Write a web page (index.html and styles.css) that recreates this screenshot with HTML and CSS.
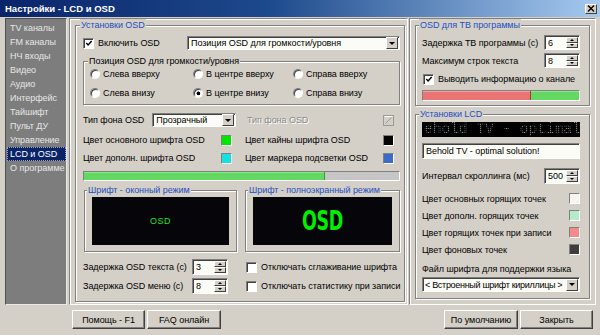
FILE: index.html
```html
<!DOCTYPE html>
<html lang="ru">
<head>
<meta charset="utf-8">
<title>Настройки - LCD и OSD</title>
<link rel="stylesheet" href="styles.css">
</head>
<body>
<div class="window">
  <div class="titlebar">
    <span class="title">Настройки - LCD и OSD</span>
    <span class="close"><svg width="8" height="7" viewBox="0 0 8 7"><path d="M1 0.5L7 6.5M7 0.5L1 6.5" stroke="#000" stroke-width="1.4"/></svg></span>
  </div>
  <div class="content">
    <ul class="sidebar">
      <li>TV каналы</li>
      <li>FM каналы</li>
      <li>НЧ входы</li>
      <li>Видео</li>
      <li>Аудио</li>
      <li>Интерфейс</li>
      <li>Тайшифт</li>
      <li>Пульт ДУ</li>
      <li>Управление</li>
      <li class="active"><span>LCD и OSD</span></li>
      <li>О программе</li>
    </ul>

    <div class="panel main-panel">
      <fieldset class="group osd-group">
        <legend>Установки OSD</legend>
        <div class="row row-enable">
          <label class="check"><span class="cb"><svg width="9" height="9" viewBox="0 0 9 9"><path d="M1.5 4l2 2.2 4-4.6" fill="none" stroke="#000" stroke-width="1.6"/></svg></span>Включить OSD</label>
          <div class="select pos-select"><span class="sel-text">Позиция OSD для громкости/уровня</span><span class="sel-btn"><i class="tri"></i></span></div>
        </div>

        <fieldset class="group pos-group">
          <legend>Позиция OSD для громкости/уровня</legend>
          <div class="radios">
            <label class="radio"><span class="rb"></span>Слева вверху</label>
            <label class="radio"><span class="rb"></span>В центре вверху</label>
            <label class="radio"><span class="rb"></span>Справа вверху</label>
            <label class="radio"><span class="rb"></span>Слева внизу</label>
            <label class="radio"><span class="rb on"></span>В центре внизу</label>
            <label class="radio"><span class="rb"></span>Справа внизу</label>
          </div>
        </fieldset>

        <div class="grid2 bg-row">
          <div class="cell">
            <span class="lbl">Тип фона OSD</span>
            <div class="select bg-select"><span class="sel-text">Прозрачный</span><span class="sel-btn"><i class="tri"></i></span></div>
          </div>
          <div class="cell">
            <span class="lbl disabled">Тип фона OSD</span>
            <svg class="pick" width="11" height="11" viewBox="0 0 11 11"><rect x="0.5" y="0.5" width="10" height="10" fill="none" stroke="#9a9a9a"/><path d="M2.5 8.5L8.5 2.5" stroke="#9a9a9a"/><path d="M1.5 1.5h8" stroke="#fff"/></svg>
          </div>
        </div>

        <div class="grid2 color-row first">
          <div class="cell"><span class="lbl">Цвет основного шрифта OSD</span><span class="swatch" style="background:#00e600"></span></div>
          <div class="cell"><span class="lbl">Цвет кайны шрифта OSD</span><span class="swatch" style="background:#050505"></span></div>
        </div>
        <div class="grid2 color-row">
          <div class="cell"><span class="lbl">Цвет дополн. шрифта OSD</span><span class="swatch" style="background:#18e0e0"></span></div>
          <div class="cell"><span class="lbl">Цвет маркера подсветки OSD</span><span class="swatch" style="background:#3b6cc8"></span></div>
        </div>

        <div class="progress osd-progress"><div class="fill green" style="width:76.5%"></div></div>

        <div class="grid2 fonts">
          <fieldset class="group font-group">
            <legend>Шрифт - оконный режим</legend>
            <div class="screen"><span class="osd-small">OSD</span></div>
          </fieldset>
          <fieldset class="group font-group">
            <legend>Шрифт - полноэкранный режим</legend>
            <div class="screen"><span class="osd-big">OSD</span></div>
          </fieldset>
        </div>

        <div class="grid2 spin-row first">
          <div class="cell"><span class="lbl">Задержка OSD текста (с)</span>
            <div class="spin osd-spin"><span class="spin-val">3</span><span class="spin-btns"><span class="sb"><i class="tri up"></i></span><span class="sb"><i class="tri"></i></span></span></div>
          </div>
          <div class="cell"><label class="check"><span class="cb"></span>Отключать сглаживание шрифта</label></div>
        </div>
        <div class="grid2 spin-row">
          <div class="cell"><span class="lbl">Задержка OSD меню (с)</span>
            <div class="spin osd-spin"><span class="spin-val">8</span><span class="spin-btns"><span class="sb"><i class="tri up"></i></span><span class="sb"><i class="tri"></i></span></span></div>
          </div>
          <div class="cell"><label class="check"><span class="cb"></span>Отключать статистику при записи</label></div>
        </div>
      </fieldset>
    </div>

    <div class="panel right-panel">
      <fieldset class="group tv-group">
        <legend>OSD для ТВ программы</legend>
        <div class="rrow spin-line first">
          <span class="lbl">Задержка ТВ программы (с)</span>
          <div class="spin r-spin"><span class="spin-val">6</span><span class="spin-btns"><span class="sb"><i class="tri up"></i></span><span class="sb"><i class="tri"></i></span></span></div>
        </div>
        <div class="rrow spin-line">
          <span class="lbl">Максимум строк текста</span>
          <div class="spin r-spin"><span class="spin-val">8</span><span class="spin-btns"><span class="sb"><i class="tri up"></i></span><span class="sb"><i class="tri"></i></span></span></div>
        </div>
        <div class="rrow check-line">
          <label class="check"><span class="cb"><svg width="9" height="9" viewBox="0 0 9 9"><path d="M1.5 4l2 2.2 4-4.6" fill="none" stroke="#000" stroke-width="1.6"/></svg></span>Выводить информацию о канале</label>
        </div>
        <div class="progress tv-progress"><div class="fill red" style="width:69%"></div><div class="fill green rest"></div></div>
      </fieldset>

      <fieldset class="group lcd-group">
        <legend>Установки LCD</legend>
        <div class="lcd"><span class="lcd-text">ehold TV - optimal</span></div>
        <div class="textbox">Behold TV - optimal solution!</div>
        <div class="rrow scroll-line">
          <span class="lbl">Интервал скроллинга (мс)</span>
          <div class="spin r-spin"><span class="spin-val">500</span><span class="spin-btns"><span class="sb"><i class="tri up"></i></span><span class="sb"><i class="tri"></i></span></span></div>
        </div>
        <div class="rrow dot-line first"><span class="lbl">Цвет основных горящих точек</span><span class="swatch" style="background:#f4f4f0"></span></div>
        <div class="rrow dot-line"><span class="lbl">Цвет дополн. горящих точек</span><span class="swatch" style="background:#b4ecc8"></span></div>
        <div class="rrow dot-line"><span class="lbl">Цвет горящих точек при записи</span><span class="swatch" style="background:#f48a8a"></span></div>
        <div class="rrow dot-line"><span class="lbl">Цвет фоновых точек</span><span class="swatch" style="background:#3e3e3e"></span></div>
        <div class="rrow file-line"><span class="lbl">Файл шрифта для поддержки языка</span></div>
        <div class="select font-select"><span class="sel-text">&lt; Встроенный шрифт кириллицы &gt;</span><span class="sel-btn"><i class="tri"></i></span></div>
      </fieldset>
    </div>
  </div>

  <div class="footer">
    <div class="btns">
      <span class="btn help">Помощь - F1</span>
      <span class="btn faq">FAQ онлайн</span>
    </div>
    <div class="btns">
      <span class="btn dflt">По умолчанию</span>
      <span class="btn closebtn">Закрыть</span>
    </div>
  </div>
</div>
</body>
</html>
```

FILE: styles.css
```css
* { box-sizing: border-box; }
html, body { margin: 0; padding: 0; }
body {
  background: #d4d0c8;
  font-family: "Liberation Sans", Arial, sans-serif;
  font-size: 9px;
  letter-spacing: -0.05px;
  line-height: 14px;
  color: #000;
}
.window {
  width: 600px;
  height: 335px;
  overflow: hidden;
  background: #d4d0c8;
  display: flex;
  flex-direction: column;
}

/* title bar */
.titlebar {
  flex: none;
  height: 17px;
  display: flex;
  align-items: center;
  justify-content: space-between;
  padding: 0 3px 0 5px;
  background: linear-gradient(90deg, #0a246a 0%, #1d4a8c 45%, #a6caf0 100%);
}
.title { color: #fff; font-weight: bold; font-size: 9.5px; letter-spacing: 0; }
.close {
  width: 12px; height: 10px;
  display: flex; align-items: center; justify-content: center;
  background: #d4d0c8;
  border: 1px solid; border-color: #fff #404040 #404040 #fff;
}

/* content */
.content {
  flex: none;
  height: 287px;
  margin-top: 1px;
  display: flex;
  padding: 0 4px 0 5px;
}
.sidebar {
  list-style: none;
  margin: 0;
  padding: 2px 0 0 1px;
  width: 62px;
  height: 287px;
  background: #7d7d7d;
  border: 1px solid; border-color: #505050 #e8e8e8 #e8e8e8 #505050;
  color: #e6e6e6;
}
.sidebar li { height: 14px; line-height: 14px; padding-left: 3px; white-space: nowrap; }
.sidebar li.active { background: #0a246a; color: #fff; outline: 1px dotted #a0a0c0; outline-offset: -1px; }

.panel {
  height: 287px;
  border: 1px solid; border-color: #808080 #fff #fff #808080;
  box-shadow: inset 1px 1px 0 #fff;
}
.main-panel { width: 339px; margin-left: 2px; padding: 0 2px 0 5px; }
.right-panel { width: 187px; margin-left: 1px; padding: 0 5px 0 5px; }

/* group boxes */
.group {
  margin: 0;
  min-width: 0;
  border: 1px solid #808080;
  box-shadow: 1px 1px 0 #fff, inset 1px 1px 0 #fff;
}
.group > legend {
  padding: 0 1px;
  margin-left: -3px;
  line-height: 12px;
  color: #1f4fc0;
  background: #d4d0c8;
  white-space: nowrap;
}
.osd-group { width: 330px; height: 283px; padding: 5px 4px 0 7px; }
.pos-group { height: 50px; margin-top: 5px; padding: 0 0 0 6px; }
.pos-group > legend { color: #000; margin-left: -2px; }
.tv-group { width: 175px; height: 87px; padding: 2px 9px 0 6px; }
.lcd-group { width: 175px; height: 191px; margin-top: 2px; padding: 2px 9px 0 6px; }

/* rows */
.row { display: flex; align-items: center; height: 14px; }
.row-enable { justify-content: space-between; }
.check { display: flex; align-items: center; white-space: nowrap; }
.cb {
  width: 11px; height: 11px; flex: none;
  display: flex; align-items: center; justify-content: center;
  background: #fff;
  border: 1px solid; border-color: #808080 #fff #fff #808080;
  box-shadow: inset 1px 1px 0 #404040;
  margin-right: 4px;
}
.cb svg { margin: 1px 0 0 1px; }

.select {
  display: flex; align-items: center;
  height: 14px;
  background: #fcfcf6;
  border: 1px solid; border-color: #808080 #fff #fff #808080;
  box-shadow: inset 1px 1px 0 #404040;
  padding: 1px 1px 1px 3px;
}
.sel-text { flex: 1; white-space: nowrap; overflow: hidden; line-height: 12px; }
.sel-btn {
  width: 12px; height: 12px; flex: none;
  display: flex; align-items: center; justify-content: center;
  background: #d4d0c8;
  border: 1px solid; border-color: #fff #404040 #404040 #fff;
}
.tri {
  width: 0; height: 0;
  border-left: 3px solid transparent; border-right: 3px solid transparent;
  border-top: 3px solid #000;
}
.tri.up { border-top: 0; border-bottom: 3px solid #000; }
.pos-select { width: 213px; }

.radios {
  display: grid;
  grid-template-columns: 103px 100px 1fr;
  row-gap: 5px;
}
.radio { display: flex; align-items: center; height: 14px; white-space: nowrap; }
.rb {
  width: 10px; height: 10px; flex: none;
  border-radius: 50%;
  background: #fff;
  border: 1px solid; border-color: #808080 #fff #fff #808080;
  box-shadow: inset 1px 1px 0 #404040;
  margin-right: 3px;
}
.rb.on { background: radial-gradient(circle at 55% 55%, #000 0 1.6px, #fff 2.2px); }

.grid2 { display: grid; grid-template-columns: 154px 155px; column-gap: 8px; }
.cell { display: flex; align-items: center; justify-content: space-between; height: 14px; white-space: nowrap; }
.bg-row { margin-top: 8px; }
.bg-row .cell:first-child { justify-content: flex-start; }
.bg-select { width: 84px; margin-left: 8px; }
.lbl { white-space: nowrap; }
.lbl.disabled { color: #8a8a8a; text-shadow: 1px 1px 0 #fff; padding-left: 2px; }
.pick { margin-right: 6px; }

.color-row.first { margin-top: 6px; }
.color-row { margin-top: 4px; }
.swatch {
  width: 11px; height: 11px; flex: none;
  border: 1px solid; border-color: #808080 #fff #fff #808080;
  margin-right: 5px;
}
.color-row .cell:last-child .swatch { margin-right: 6px; }

.progress {
  display: flex;
  border: 1px solid; border-color: #808080 #fff #fff #808080;
  background: #c6c6c6;
}
.osd-progress { height: 10px; margin-top: 6px; }
.fill { height: 100%; }
.fill.green { background: #62d862; border-right: 1px solid #3b9b3b; box-shadow: inset 0 1px 0 #8ae88a; }
.fill.red { background: #ea7474; border-right: 1px solid #a33b3b; box-shadow: inset 0 1px 0 #f5a0a0; }
.fill.rest { flex: 1; border-right: 0; }

.fonts { margin-top: 3px; }
.font-group { height: 68px; padding: 1px 7px 0 7px; }
.fonts .font-group:first-child { margin-left: 1px; }
.font-group > legend { margin-left: -5px; }
.screen {
  height: 48px;
  background: #05050a;
  display: flex; align-items: center; justify-content: center;
}
.osd-small { color: #1ee21e; font-size: 9px; letter-spacing: 0.5px; }
.osd-big {
  color: #00f000;
  font-family: "DejaVu Sans Condensed", "DejaVu Sans", sans-serif;
  font-weight: bold;
  font-size: 27px;
  line-height: 28px;
  transform: scaleX(0.72);
  letter-spacing: -0.5px;
}

.spin-row.first { margin-top: 7px; }
.spin-row { margin-top: 3px; }
.spin-row .cell { height: 16px; }
.spin-row .cell:first-child { justify-content: space-between; }
.spin-row .cb { margin-left: 1px; }
.spin {
  display: flex;
  background: #fcfcf6;
  border: 1px solid; border-color: #808080 #fff #fff #808080;
  box-shadow: inset 1px 1px 0 #404040;
  padding: 1px;
}
.osd-spin { width: 36px; height: 16px; margin-right: 9px; }
.spin-val { flex: 1; padding-left: 2px; line-height: 12px; }
.spin-btns { width: 12px; display: flex; flex-direction: column; }
.sb {
  flex: 1;
  display: flex; align-items: center; justify-content: center;
  background: #d4d0c8;
  border: 1px solid; border-color: #fff #404040 #404040 #fff;
}
.sb .tri { border-left-width: 2px; border-right-width: 2px; border-top-width: 2px; }
.sb .tri.up { border-bottom-width: 2px; }

/* right column */
.rrow { display: flex; align-items: center; justify-content: space-between; white-space: nowrap; }
.spin-line { height: 15px; margin-top: 3px; }
.spin-line.first { margin-top: 2px; }
.r-spin { width: 36px; height: 15px; }
.check-line { height: 14px; margin-top: 4px; padding-left: 1px; }
.tv-progress { height: 11px; margin-top: 4px; }

.lcd {
  height: 15px;
  background: #000;
  position: relative;
  overflow: hidden;
  display: flex; align-items: center;
  padding-left: 2px;
}
.lcd-text {
  font-family: "Liberation Mono", "DejaVu Sans Mono", monospace;
  font-size: 14.5px;
  letter-spacing: 0;
  line-height: 15px;
  color: #8a8a8a;
  white-space: nowrap;
}
.lcd::after {
  content: "";
  position: absolute;
  inset: 0;
  background:
    repeating-linear-gradient(90deg, transparent 0 1px, rgba(0,0,0,0.75) 1px 2px),
    repeating-linear-gradient(0deg, transparent 0 1px, rgba(0,0,0,0.75) 1px 2px);
}
.textbox {
  margin-top: 6px;
  height: 16px;
  background: #fcfcf6;
  border: 1px solid; border-color: #808080 #fff #fff #808080;
  box-shadow: inset 1px 1px 0 #404040;
  padding: 0 3px;
  line-height: 14px;
  white-space: nowrap;
}
.scroll-line { height: 16px; margin-top: 9px; }
.scroll-line .r-spin { height: 16px; }
.dot-line { height: 17px; }
.dot-line.first { margin-top: 6px; }
.dot-line .swatch { margin-right: 0; }
.file-line { height: 14px; margin-top: 4px; }
.font-select { margin-top: 1px; height: 15px; padding-left: 2px; }
.font-select .sel-text { letter-spacing: -0.3px; }

/* footer */
.footer {
  flex: none;
  height: 30px;
  display: flex;
  justify-content: space-between;
  padding: 5px 7px 0 72px;
}
.btns { display: flex; gap: 2px; }
.btn {
  height: 19px;
  display: flex; align-items: center; justify-content: center;
  background: #d4d0c8;
  border: 1px solid; border-color: #fff #404040 #404040 #fff;
  box-shadow: inset -1px -1px 0 #808080;
  white-space: nowrap;
}
.help { width: 73px; }
.faq { width: 74px; }
.dflt { width: 74px; }
.closebtn { width: 73px; }
```
